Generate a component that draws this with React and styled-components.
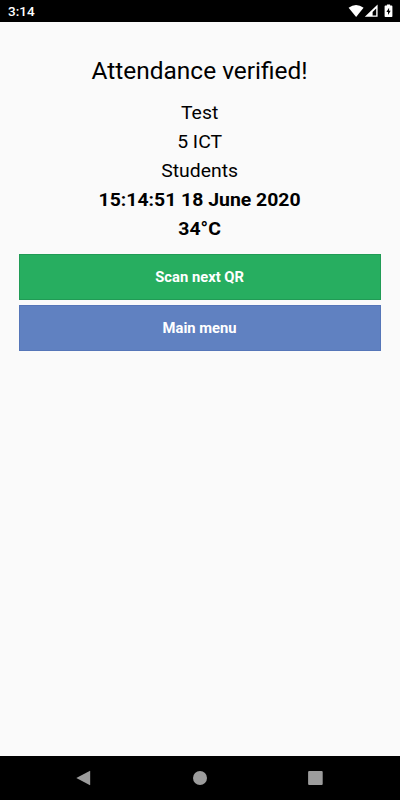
import React from 'react';
import styled, { createGlobalStyle } from 'styled-components';

const App = () => {
  return (
    <Screen>
      <GlobalStyle />
      <StatusBar>
        <Clock>3:14</Clock>
        <StatusIcons width='46' height='14' viewBox='0 0 46 14'>
          <path d='M0.6 3.8 Q8 -1.6 15.6 3.8 L8.1 13 Z' fill='#fff' />
          <path d='M29.6 0.6 V12.8 H16.8 Z M28.2 4.6 L24.6 8 V11.4 H28.2 Z' fill='#fff' fillRule='evenodd' />
          <path
            d='M37.4 1.6 H38.9 V0.4 H42.1 V1.6 H43.6 Q44.4 1.6 44.4 2.4 V12.2 Q44.4 13 43.6 13 H37.4 Q36.6 13 36.6 12.2 V2.4 Q36.6 1.6 37.4 1.6 Z'
            fill='#fff'
          />
          <path d='M41.1 3.7 L38.4 7.9 H40 V10.9 L42.7 6.7 H41.1 Z' fill='#000' />
        </StatusIcons>
      </StatusBar>

      <Content>
        <Title>Attendance verified!</Title>
        <Line>Test</Line>
        <Line>5 ICT</Line>
        <Line>Students</Line>
        <Line $bold>15:14:51 18 June 2020</Line>
        <Line $bold>34°C</Line>

        <ButtonSet>
          <ScanButton>
            <Label>Scan next QR</Label>
          </ScanButton>
          <MenuButton>
            <Label>Main menu</Label>
          </MenuButton>
        </ButtonSet>
      </Content>

      <NavBar>
        <NavIcon viewBox='0 0 16 16'>
          <path d='M0.3 8 L13.6 0.9 Q14.2 0.7 14.2 1.4 V14.6 Q14.2 15.3 13.6 15.1 Z' />
        </NavIcon>
        <NavIcon viewBox='0 0 16 16'>
          <circle cx='8' cy='8' r='7' />
        </NavIcon>
        <NavIcon viewBox='0 0 16 16'>
          <rect x='0.1' y='1' width='14.6' height='14' rx='1' />
        </NavIcon>
      </NavBar>
    </Screen>
  );
};

export default App;

const GlobalStyle = createGlobalStyle`
  body {
    margin: 0;
    font-family: Roboto, 'Liberation Sans', sans-serif;
  }
`;

const Screen = styled.div`
  display: flex;
  flex-direction: column;
  height: 100vh;
  background-color: #fafafa;
  color: #000;
`;

const StatusBar = styled.header`
  display: flex;
  align-items: center;
  justify-content: space-between;
  height: 22px;
  padding: 0 6px 0 8px;
  box-sizing: border-box;
  background-color: #000;
  color: #fff;
`;

const Clock = styled.span`
  font-size: 13.5px;
  font-weight: 500;
  line-height: 22px;
`;

const StatusIcons = styled.svg`
  display: block;
`;

const Content = styled.main`
  flex: 1;
  padding: 32px 19.4px 0;
  text-align: center;
`;

const Title = styled.h1`
  margin: 0 0 10px;
  font-size: 23.4px;
  font-weight: 400;
  line-height: 34px;
  transform: scaleX(1.045);
`;

const Line = styled.p`
  margin: 0;
  font-size: 18.4px;
  font-weight: ${({$bold}) => ($bold ? 700 : 400)};
  line-height: 29px;
  transform: scaleX(1.055);
`;

const ButtonSet = styled.div`
  display: flex;
  flex-direction: column;
  gap: 5px;
  margin-top: 11px;
`;

const Button = styled.button`
  height: 46px;
  padding: 0;
  border: 1px solid;
  color: #fff;
  font-family: inherit;
  font-size: 14px;
  font-weight: 700;
  cursor: pointer;
`;

const Label = styled.span`
  display: block;
  transform: scaleX(1.055);
`;

const ScanButton = styled(Button)`
  border-color: #219b55;
  background-color: #27ae60;
`;

const MenuButton = styled(Button)`
  border-color: #5576b8;
  background-color: #6081c1;
`;

const NavBar = styled.nav`
  display: flex;
  align-items: center;
  justify-content: space-between;
  height: 44px;
  padding: 0 76px;
  box-sizing: border-box;
  background-color: #000;
`;

const NavIcon = styled.svg`
  width: 16px;
  height: 16px;
  fill: #9c9c9c;
`;
